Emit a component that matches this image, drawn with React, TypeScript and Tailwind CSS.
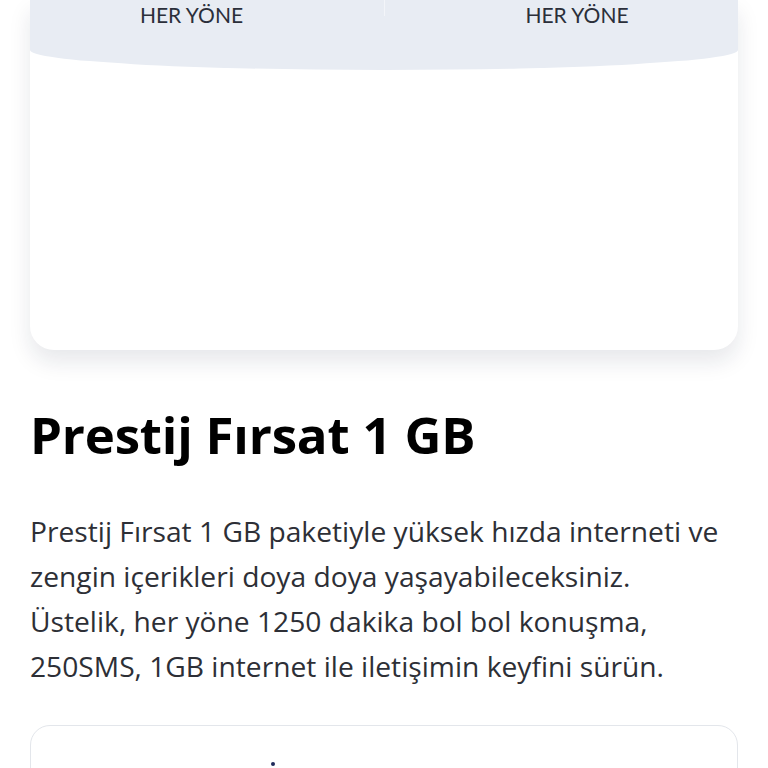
export default function App() {
  return (
    <div className="w-[768px] h-[768px] overflow-hidden bg-white" style={{ fontFamily: '"Open Sans", "Noto Sans", sans-serif' }}>
      <div className="px-[30px]">
        {/* Paket kartı */}
        <div className="h-[350px] rounded-b-[24px] bg-white shadow-[0_12px_22px_rgba(20,30,60,0.10)] overflow-hidden">
          <div className="h-[70px] bg-[#e8ecf3] rounded-b-[50%_20px] grid grid-cols-2" style={{ fontFamily: 'Lato, sans-serif' }}>
            <div className="flex justify-center pr-[31px] pt-[2px] text-[21px] leading-[26px] text-[#2b2f3a]">HER YÖNE</div>
            <div className="relative flex justify-center pl-[32px] pt-[2px] text-[21px] leading-[26px] text-[#2b2f3a]">
              <span className="absolute left-0 top-0 h-[16px] w-px bg-[#f3f5f9]" />
              HER YÖNE
            </div>
          </div>
        </div>

        <h1 className="mt-[54px] text-[51px] leading-[60px] font-bold text-black tracking-[-0.2px]">Prestij Fırsat 1 GB</h1>

        <p className="mt-[45px] text-[28.2px] leading-[45px] text-[#2d2f36]">
          <span className="block whitespace-nowrap">Prestij Fırsat 1 GB paketiyle yüksek hızda interneti ve</span>
          <span className="block whitespace-nowrap">zengin içerikleri doya doya yaşayabileceksiniz.</span>
          <span className="block whitespace-nowrap">Üstelik, her yöne 1250 dakika bol bol konuşma,</span>
          <span className="block whitespace-nowrap">250SMS, 1GB internet ile iletişimin keyfini sürün.</span>
        </p>

        <div className="mt-[36px] h-[100px] rounded-[20px] border border-[#e3e6eb] bg-white">
          <div className="pt-[36px] pl-[240px]">
            <span className="block w-[4px] h-[4px] rounded-full bg-[#1e2a5a]" />
          </div>
        </div>
      </div>
    </div>
  );
}
